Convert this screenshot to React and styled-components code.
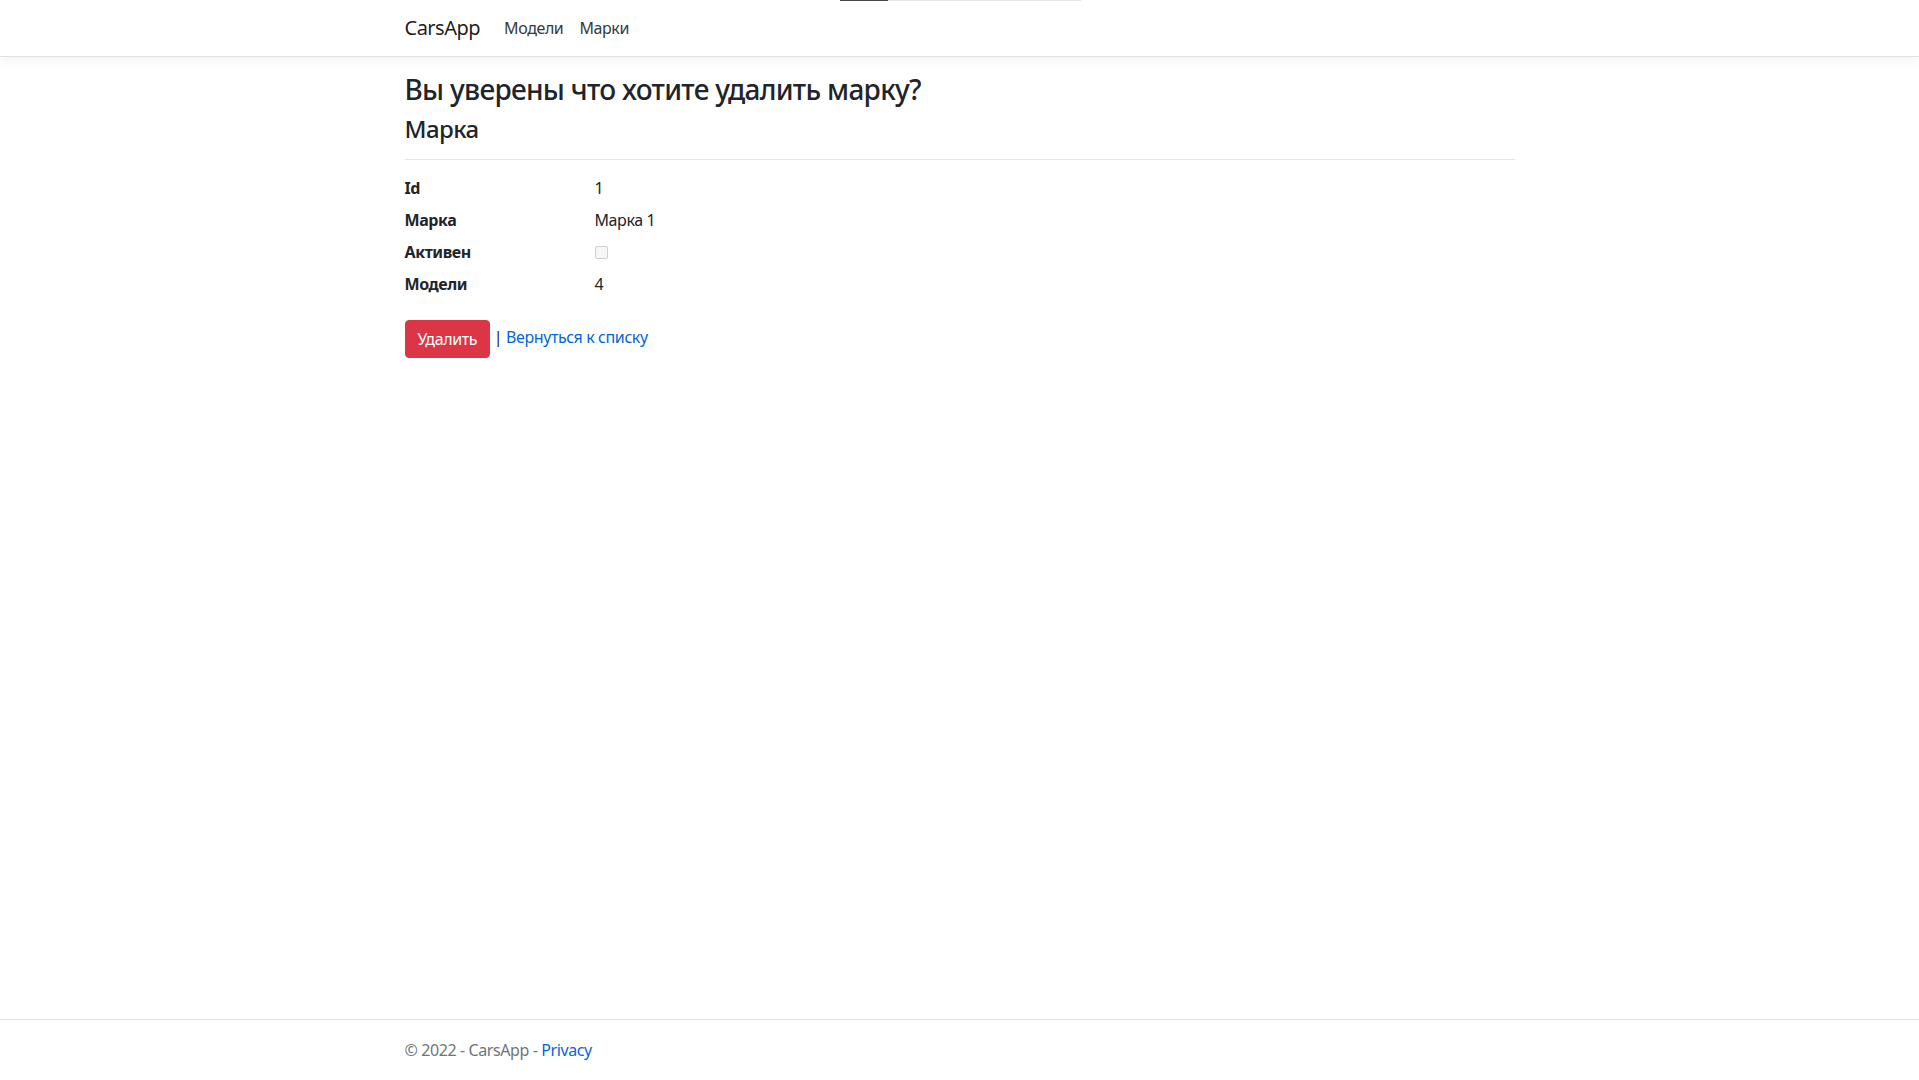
import React from "react";
import styled, { createGlobalStyle } from "styled-components";

const FONT = `"Segoe UI", "Noto Sans", "Open Sans", sans-serif`;

const GlobalStyle = createGlobalStyle`
  *, *::before, *::after { box-sizing: border-box; letter-spacing: -0.025em; }
  html, body { margin: 0; padding: 0; }
  body {
    font-family: ${FONT};
    font-size: 16px;
    font-weight: 400;
    line-height: 1.5;
    color: #212529;
    background: #fff;
  }
`;

const Page = styled.div`
  position: relative;
  min-height: 100vh;
  display: flex;
  flex-direction: column;
`;

const LoadStrip = styled.div`
  position: absolute;
  top: 0;
  left: calc(50% - 120px);
  width: 241px;
  height: 1px;
  background: #e5e5e5;
  &::before {
    content: "";
    display: block;
    width: 48px;
    height: 1px;
    background: #444;
  }
`;

const Navbar = styled.header`
  background: #fff;
  border-bottom: 1px solid #dee2e6;
  box-shadow: 0 0.25rem 0.75rem rgba(0, 0, 0, 0.05);
  padding: 8px 0;
  margin-bottom: 16px;
`;

const Container = styled.div`
  width: 100%;
  max-width: 1140px;
  margin: 0 auto;
  padding: 0 15px;
  display: ${(p) => (p.$flex ? "flex" : "block")};
  align-items: center;
`;

const Brand = styled.a`
  font-size: 20px;
  line-height: 30px;
  padding: 5px 0;
  margin-right: 16px;
  color: rgba(0, 0, 0, 0.9);
  text-decoration: none;
  white-space: nowrap;
`;

const NavList = styled.nav`
  display: flex;
`;

const NavLink = styled.a`
  display: block;
  padding: 8px;
  color: #343a40;
  text-decoration: none;
`;

const Main = styled.main`
  flex: 1;
  padding-bottom: 16px;
`;

const Title = styled.h3`
  margin: 0 0 8px;
  font-size: 28px;
  font-weight: 500;
  line-height: 1.2;
`;

const Subtitle = styled.h4`
  margin: 0 0 8px;
  font-size: 24px;
  font-weight: 500;
  line-height: 1.2;
`;

const Rule = styled.hr`
  margin: 16px 0;
  border: 0;
  border-top: 1px solid rgba(0, 0, 0, 0.1);
`;

const DetailList = styled.dl`
  display: grid;
  grid-template-columns: 190px 1fr;
  margin: 0 -15px 16px;
`;

const Term = styled.dt`
  font-weight: 700;
  padding: 0 15px;
  margin: 0;
`;

const Desc = styled.dd`
  padding: 0 15px;
  margin: 0 0 8px;
`;

const CheckBox = styled.input`
  appearance: none;
  display: inline-block;
  vertical-align: middle;
  width: 13px;
  height: 13px;
  margin: -4px 0 0 0;
  border: 1px solid #cfcfcf;
  border-radius: 2px;
  background: #f7f7f7;
`;

const Actions = styled.form`
  margin: 0;
`;

const DangerButton = styled.button`
  font-family: inherit;
  font-size: 16px;
  line-height: 24px;
  padding: 6px 12px;
  color: #fff;
  background: #dc3545;
  border: 1px solid #dc3545;
  border-radius: 4px;
  vertical-align: middle;
  cursor: pointer;
`;

const Link = styled.a`
  color: #0366d6;
  text-decoration: none;
`;

const Footer = styled.footer`
  border-top: 1px solid #dee2e6;
  color: #6c757d;
  line-height: 60px;
  white-space: nowrap;
`;

const details = [
  { term: "Id", value: "1" },
  { term: "Марка", value: "Марка 1" },
  { term: "Активен", value: null },
  { term: "Модели", value: "4" },
];

export default function App() {
  return (
    <>
      <GlobalStyle />
      <Page>
        <LoadStrip />
        <Navbar>
          <Container $flex>
            <Brand href="#">CarsApp</Brand>
            <NavList>
              <NavLink href="#">Модели</NavLink>
              <NavLink href="#">Марки</NavLink>
            </NavList>
          </Container>
        </Navbar>
        <Main>
          <Container>
            <Title>Вы уверены что хотите удалить марку?</Title>
            <div>
              <Subtitle>Марка</Subtitle>
              <Rule />
              <DetailList>
                {details.map((d) => (
                  <React.Fragment key={d.term}>
                    <Term>{d.term}</Term>
                    <Desc>
                      {d.value === null ? (
                        <CheckBox type="checkbox" disabled readOnly />
                      ) : (
                        d.value
                      )}
                    </Desc>
                  </React.Fragment>
                ))}
              </DetailList>
              <Actions onSubmit={(e) => e.preventDefault()}>
                <DangerButton type="submit">Удалить</DangerButton> |{" "}
                <Link href="#">Вернуться к списку</Link>
              </Actions>
            </div>
          </Container>
        </Main>
        <Footer>
          <Container>
            © 2022 - CarsApp - <Link href="#">Privacy</Link>
          </Container>
        </Footer>
      </Page>
    </>
  );
}
